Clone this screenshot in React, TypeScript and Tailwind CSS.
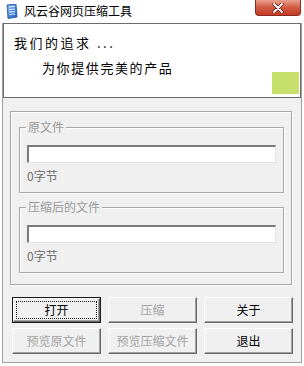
import React from "react";

const font = { fontFamily: '"Noto Sans CJK SC", "Liberation Sans", sans-serif' };

function Btn({ label, disabled, primary }: { label: string; disabled?: boolean; primary?: boolean }) {
  if (primary) {
    return (
      <div className="w-[89px] h-[26px] border border-[#1a1a1a] bg-[#f0f0f0]">
        <div className="w-full h-full border-t border-l border-t-white border-l-white border-b border-r border-b-[#696969] border-r-[#696969] shadow-[inset_-1px_-1px_0_#a0a0a0] p-[2px]">
          <div className="w-full h-full border border-dotted border-[#222] flex items-center justify-center text-[12px] text-black leading-none">
            {label}
          </div>
        </div>
      </div>
    );
  }
  return (
    <div className="w-[89px] h-[26px] bg-[#f0f0f0] border-t border-l border-t-white border-l-white border-b border-r border-b-[#696969] border-r-[#696969] shadow-[inset_-1px_-1px_0_#a0a0a0] flex items-center justify-center">
      <span className={"text-[12px] leading-none " + (disabled ? "text-[#a3a3a3]" : "text-black")}>{label}</span>
    </div>
  );
}

function Group({ title }: { title: string }) {
  return (
    <div className="relative ml-[8px] w-[265px] h-[66px] border border-[#a6a6a6] shadow-[inset_1px_1px_0_#ffffff,1px_1px_0_#ffffff]">
      <div className="absolute left-[6px] top-[-8px] px-[2px] bg-[#f0f0f0] text-[12px] leading-[14px] text-[#9a9a9a]">
        {title}
      </div>
      <div className="ml-[7px] mt-[17px] w-[249px] h-[18px] bg-white border-t-2 border-l-2 border-t-[#7a7a7a] border-l-[#7a7a7a] border-b border-r border-b-[#e3e3e3] border-r-[#e3e3e3]" />
      <div className="ml-[7px] mt-[6px] text-[12px] leading-[14px] text-[#6d6d6d]">0字节</div>
    </div>
  );
}

export default function App() {
  return (
    <div className="w-[304px] h-[366px] bg-white overflow-hidden" style={font}>
      {/* title bar */}
      <div className="h-[23px] flex items-start justify-between">
        <div className="flex items-center h-[20px] pl-[5px] gap-[6px] mt-[1px]">
          <svg width="13" height="15" viewBox="0 0 13 15">
            <defs>
              <linearGradient id="ig" x1="0" y1="0" x2="1" y2="1">
                <stop offset="0" stopColor="#7fb2ef" />
                <stop offset="1" stopColor="#1f5fbf" />
              </linearGradient>
            </defs>
            <path d="M2 1 L11 0 L12 13 L3 14.5 Z" fill="url(#ig)" stroke="#1d4d9a" strokeWidth="0.8" />
            <path d="M4 3 L10 2.4 M4 5.5 L10 5 M4 8 L10 7.6" stroke="#e8f2ff" strokeWidth="1.2" />
            <path d="M4.2 10.5 L10.2 10" stroke="#cfe2ff" strokeWidth="1.2" />
          </svg>
          <span className="text-[12px] leading-none text-black">风云谷网页压缩工具</span>
        </div>
        <div className="mr-[3px] w-[46px] h-[16px] rounded-b-[4px] border border-[#8a2b1e] border-t-0 bg-gradient-to-b from-[#e9a08f] via-[#d25a43] to-[#c23b25] flex items-center justify-center">
          <svg width="12" height="10" viewBox="0 0 12 10">
            <path d="M2 1 L10 9 M10 1 L2 9" stroke="#5a1a10" strokeWidth="3.2" strokeLinecap="round" />
            <path d="M2 1 L10 9 M10 1 L2 9" stroke="#ffffff" strokeWidth="1.8" strokeLinecap="round" />
          </svg>
        </div>
      </div>

      {/* window frame */}
      <div className="mx-[2px] w-[300px] h-[340px] bg-[#f0f0f0] border-l border-r border-b border-[#9e9e9e] flex flex-col">
        {/* header */}
        <div className="w-[298px] h-[75px] bg-white border border-[#6b6b6b] flex flex-col relative">
          <div className="ml-[10px] mt-[11px] text-[13px] leading-[15px] tracking-[2.5px] text-black">我们的追求 ...</div>
          <div className="ml-[38px] mt-[10px] text-[13px] leading-[15px] tracking-[1.6px] text-black">为你提供完美的产品</div>
          <div className="absolute right-[1px] bottom-[3px] w-[27px] h-[22px] bg-[#c7e06c]" />
        </div>

        {/* container */}
        <div className="ml-[7px] mt-[13px] w-[282px] h-[174px] border border-[#a6a6a6] shadow-[inset_1px_1px_0_#ffffff,1px_1px_0_#ffffff] flex flex-col">
          <div className="mt-[15px]">
            <Group title="原文件" />
          </div>
          <div className="mt-[14px]">
            <Group title="压缩后的文件" />
          </div>
        </div>

        {/* buttons */}
        <div className="ml-[9px] mt-[12px] flex flex-col gap-[5px]">
          <div className="flex gap-[7px]">
            <Btn label="打开" primary />
            <Btn label="压缩" disabled />
            <Btn label="关于" />
          </div>
          <div className="flex gap-[7px]">
            <Btn label="预览原文件" disabled />
            <Btn label="预览压缩文件" disabled />
            <Btn label="退出" />
          </div>
        </div>
      </div>
    </div>
  );
}
